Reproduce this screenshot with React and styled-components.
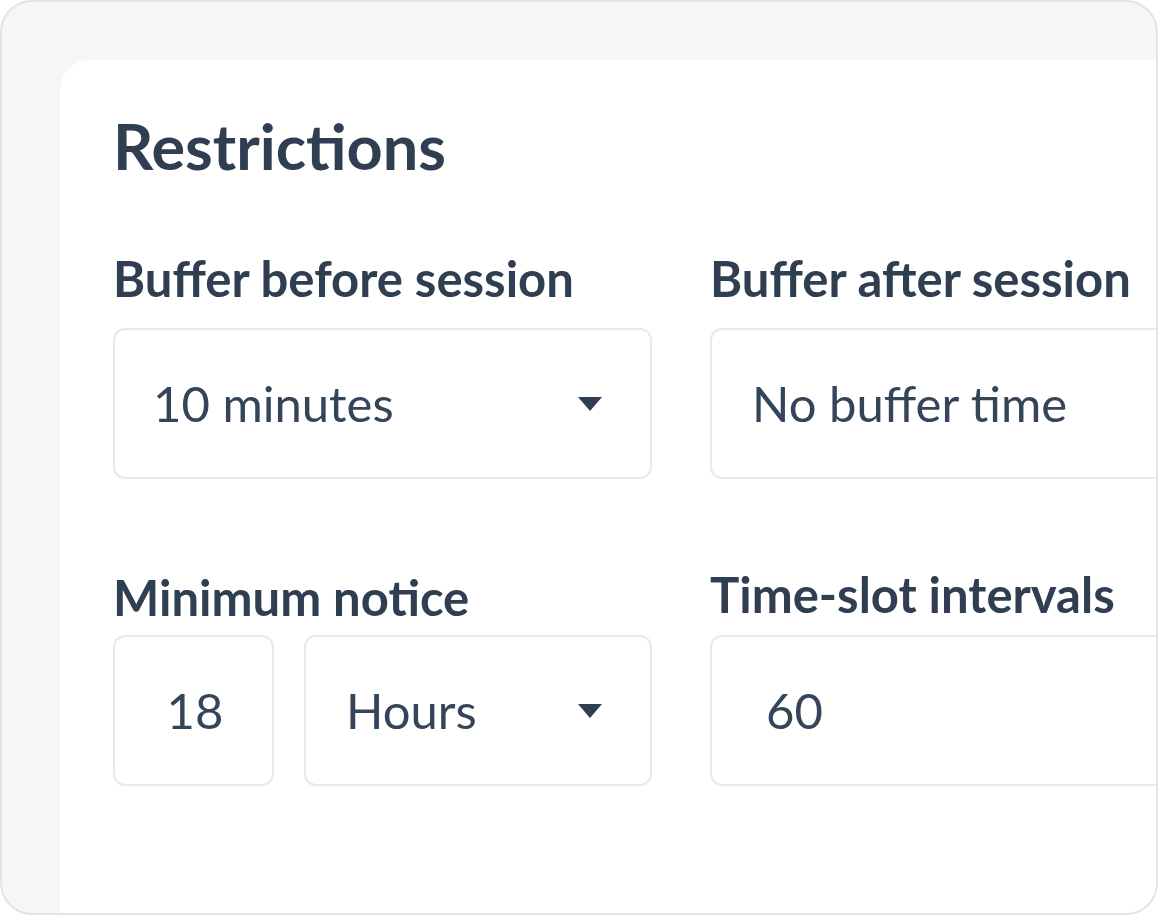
import React from 'react';
import styled, { createGlobalStyle } from 'styled-components';

const GlobalStyle = createGlobalStyle`
  html, body {
    margin: 0;
    padding: 0;
    background: #ffffff;
  }
  * {
    box-sizing: border-box;
  }
`;

const Frame = styled.div`
  width: 1158px;
  height: 915px;
  border: 2px solid #e1e5e9;
  border-radius: 32px;
  background-color: #f4f6f8;
  overflow: hidden;
  display: flex;
  padding: 58px 0 0 58px;
  font-family: Lato, 'Noto Sans', sans-serif;
  color: #2f3e50;
`;

const Card = styled.section`
  flex: 0 0 1200px;
  background-color: #ffffff;
  border-top-left-radius: 30px;
  padding: 54px 0 0 53px;
`;

const Title = styled.h1`
  margin: 0 0 77px;
  font-size: 63px;
  line-height: 1;
  font-weight: 700;
`;

const Grid = styled.div`
  display: grid;
  grid-template-columns: 539px 539px;
  column-gap: 58px;
  row-gap: 94px;
`;

const Field = styled.div`
  display: flex;
  flex-direction: column;
`;

const Label = styled.label`
  font-size: 49px;
  line-height: 1;
  font-weight: 700;
  margin-top: ${({ $shift }) => ($shift ? -$shift : 0)}px;
  margin-bottom: ${({ $gap, $shift }) => $gap + ($shift || 0)}px;
`;

const Controls = styled.div`
  display: flex;
  gap: 30px;
`;

const Box = styled.div`
  flex: ${({ $width }) => ($width ? `0 0 ${$width}px` : '1 1 auto')};
  height: 151px;
  border: 2px solid #e6e9ed;
  border-radius: 12px;
  background: #ffffff;
  display: flex;
  align-items: center;
  justify-content: ${({ $center }) => ($center ? 'center' : 'space-between')};
  padding: 0 ${({ $center }) => ($center ? 0 : 48)}px 0 ${({ $pad }) => $pad}px;
  font-size: 49px;
  line-height: 1;
  font-weight: 400;
  color: #34455a;
`;

const Caret = () => (
  <svg width="24" height="14" viewBox="0 0 24 14">
    <path d="M0 0 H24 L12 14 Z" fill="#2f3e50" />
  </svg>
);

const App = () => {
  return (
    <>
      <GlobalStyle />
      <Frame>
        <Card>
          <Title>Restrictions</Title>
          <Grid>
            <Field>
              <Label $gap={25}>Buffer before session</Label>
              <Box $pad={38}>
                <span>10 minutes</span>
                <Caret />
              </Box>
            </Field>
            <Field>
              <Label $gap={25}>Buffer after session</Label>
              <Box $pad={40}>
                <span>No buffer time</span>
              </Box>
            </Field>
            <Field>
              <Label $gap={13}>Minimum notice</Label>
              <Controls>
                <Box $width={161} $center $pad={3}>
                  18
                </Box>
                <Box $pad={40}>
                  <span>Hours</span>
                  <Caret />
                </Box>
              </Controls>
            </Field>
            <Field>
              <Label $gap={13} $shift={3}>Time-slot intervals</Label>
              <Box $pad={54}>
                <span>60</span>
              </Box>
            </Field>
          </Grid>
        </Card>
      </Frame>
    </>
  );
};

export default App;
